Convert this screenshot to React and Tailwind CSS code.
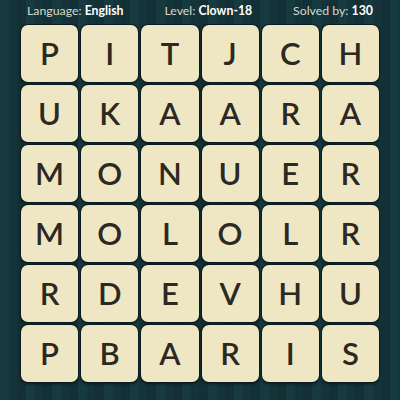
const rows = [
  ['P', 'I', 'T', 'J', 'C', 'H'],
  ['U', 'K', 'A', 'A', 'R', 'A'],
  ['M', 'O', 'N', 'U', 'E', 'R'],
  ['M', 'O', 'L', 'O', 'L', 'R'],
  ['R', 'D', 'E', 'V', 'H', 'U'],
  ['P', 'B', 'A', 'R', 'I', 'S'],
]

function Tile({ letter }) {
  return (
    <div className="flex h-[57px] items-center justify-center rounded-[7px] bg-[#efe7c3] text-[31px] font-semibold text-[#2c2822] shadow-[0_0_0_1px_#0a1c1f,0_2px_3px_rgba(0,0,0,0.5)]">
      {letter}
    </div>
  )
}

export default function App() {
  return (
    <div
      className="flex h-[400px] w-[400px] flex-col overflow-hidden bg-[#15353a] bg-[repeating-linear-gradient(90deg,#163a3f_0px,#163a3f_9px,#14343a_9px,#14343a_17px,#123035_17px,#123035_26px)]"
      style={{ fontFamily: 'Lato, "Open Sans", sans-serif' }}
    >
      <div className="flex h-[25px] items-center justify-between px-[27px] pb-[2px] text-[12.3px] text-[#d9d8cf]">
        <div>
          Language: <span className="font-bold text-white">English</span>
        </div>
        <div>
          Level: <span className="font-bold text-white">Clown-18</span>
        </div>
        <div>
          Solved by: <span className="font-bold text-white">130</span>
        </div>
      </div>
      <div className="ml-[21px] grid w-[358px] grid-cols-6 gap-[3px]">
        {rows.flat().map((l, i) => (
          <Tile key={i} letter={l} />
        ))}
      </div>
    </div>
  )
}
